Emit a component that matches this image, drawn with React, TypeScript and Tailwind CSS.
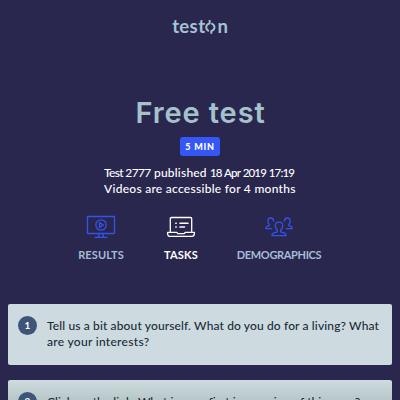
import React from "react";

function MonitorIcon() {
  return (
    <svg width="30" height="24" viewBox="0 0 30 24" fill="none" stroke="#3552ea" strokeWidth="1.3" strokeLinejoin="round" strokeLinecap="round">
      <rect x="1.5" y="1.5" width="27" height="17" rx=".6" />
      <circle cx="15" cy="10" r="5.2" />
      <path d="M13.5 7.6v4.8l3.900-2.400zM12.800 18.500v3.500M17.200 18.500v3.500M9 22.300h12" />
    </svg>
  );
}

function LaptopIcon() {
  return (
    <svg width="30" height="24" viewBox="0 0 30 24" fill="none" stroke="#fff" strokeWidth="1.3" strokeLinejoin="round" strokeLinecap="round">
      <path d="M4.3 16.300V3.700q0-1.200 1.200-1.200h19q1.200 0 1.200 1.200v12.600M1.600 17.400h9.200l1 1.200h6.400l1-1.200h9.200v1.100q0 2.900-2.800 2.900H4.400q-2.800 0-2.800-2.900z" />
      <path d="M9.800 8.300h.4M14 8.300h8M9.800 12h.4M14 12h4.500" strokeWidth="1.6" />
    </svg>
  );
}

function PeopleIcon() {
  return (
    <svg width="28" height="22" viewBox="0 0 28 22" fill="none" stroke="#3552ea" strokeWidth="1.3" strokeLinejoin="round" strokeLinecap="round">
      <path d="M14 5.100c-3 0-4 1.800-3.700 4.100.2 1.700 1 3.100 2.100 4v1.600l-4.100 1.400c-1 .4-1.400 1.200-1.400 2.500h14.200c0-1.300-.4-2.100-1.400-2.500l-4.100-1.400v-1.600c1.100-.9 1.900-2.300 2.100-4 .3-2.300-.7-4.100-3.700-4.100z" />
      <path d="M8.600 4c-.1-1.900-1.100-3-2.800-3C3.600 1 2.600 2.500 2.900 4.500c.1 1.200.6 2.100 1.200 2.700v1.500l-2.300 1c-.7.3-.9.9-.9 1.900h5.800" />
      <path d="M19.400 4c.1-1.900 1.100-3 2.800-3 2.200 0 3.200 1.500 2.900 3.500-.1 1.200-.6 2.100-1.200 2.700v1.500l2.300 1c.7.3.9.900.9 1.900h-5.800" />
    </svg>
  );
}

function Logo() {
  return (
    <div className="flex h-5 items-center text-[18.5px] leading-5 font-bold text-[#a5c3d3]" aria-label="teston">
      <span className="tracking-[0.4px]">test</span>
      <svg width="11" height="18" viewBox="0 0 11 18" fill="none" stroke="#a5c3d3" strokeWidth="1.9">
        <path d="M4.600 3v3.300Q1.200 7.500 1.200 10.300q0 2.600 2.700 3.800M6.300 6.300q3.200 1.300 3.200 4 0 2.700-3.200 3.800v2.700" />
      </svg>
      <span className="ml-px">n</span>
    </div>
  );
}

function Task({ n, className, children }: { n: number; className: string; children: React.ReactNode }) {
  return (
    <div className={`flex h-[61px] shrink-0 gap-[10px] rounded-[2px] pt-[12px] pl-[10px] ${className}`}>
      <div className="flex size-[19px] shrink-0 items-center justify-center rounded-full bg-[#3f5578] text-[10px] font-bold text-white">{n}</div>
      <p className="pt-[2px] text-[12px] leading-4 font-medium whitespace-nowrap text-[#202a35]">{children}</p>
    </div>
  );
}

export default function App() {
  return (
    <main className="flex h-[400px] w-[400px] flex-col overflow-hidden bg-[#2a274f] font-['Lato','Liberation_Sans',sans-serif]">
      <header className="flex justify-center pt-4">
        <Logo />
      </header>
      <section className="flex flex-col items-center pt-[56px] text-white">
        <h1 className="h-[45px] pl-px font-['Inter',sans-serif] text-[29px] leading-[42px] font-semibold tracking-[0.9px] whitespace-nowrap text-[#a5c2cc]">Free test</h1>
        <span className="flex h-[19px] w-10 items-center justify-center rounded-[3px] bg-[#3557f5] text-[9px] font-black tracking-[0.8px]">5 MIN</span>
        <div className="flex w-[192px] flex-col pt-[9px] text-[12px] leading-4 font-medium whitespace-nowrap">
          <span className="flex">
            <span className="w-[50px] tracking-[-0.65px]">Test 2777</span>
            <span className="w-[56px] tracking-[0.2px]">published</span>
            <span className="text-[11.5px] tracking-[-0.85px] [word-spacing:0.8px]">18 Apr 2019 17:19</span>
          </span>
          <span className="tracking-[0.27px]">Videos are accessible for 4 months</span>
        </div>
      </section>
      <nav className="mt-[18px] flex justify-center gap-[39px] pr-[2px] text-[11px] leading-4 font-bold text-[#a5bdd5]">
        <div className="flex w-[47px] flex-col items-center gap-[8px]"><MonitorIcon /><span className="tracking-[0.1px]">RESULTS</span></div>
        <div className="flex w-[35px] flex-col items-center gap-[8px] text-white"><LaptopIcon /><span className="tracking-[0.2px]">TASKS</span></div>
        <div className="flex w-[83px] flex-col items-center gap-[8px]"><div className="h-6 pt-[2px]"><PeopleIcon /></div><span className="tracking-[-0.35px]">DEMOGRAPHICS</span></div>
      </nav>
      <section className="mt-[41px] flex flex-col gap-[15px] px-2">
        <Task n={1} className="bg-[#cddbe1]">
          <span className="tracking-[0.13px]">Tell us a bit about yourself. What do you do for a living? What</span><br />
          <span className="tracking-[0.3px]">are your interests?</span>
        </Task>
        <Task n={2} className="bg-linear-to-b from-[#cddbde] to-[#8ca09f]">
          <span className="tracking-[0.04px]">Click on the link. What is your first impression of this page?</span>
        </Task>
      </section>
    </main>
  );
}
